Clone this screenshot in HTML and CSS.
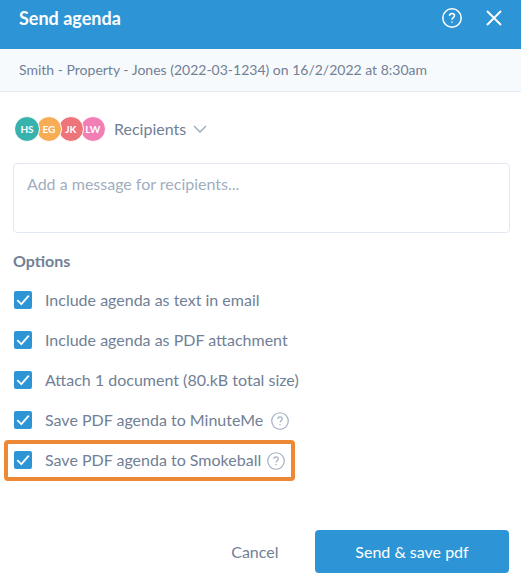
FILE: index.html
```html
<!DOCTYPE html>
<html lang="en">
<head>
<meta charset="utf-8">
<title>Send agenda</title>
<link rel="stylesheet" href="styles.css">
</head>
<body>
<svg class="defs" width="0" height="0" aria-hidden="true">
  <symbol id="help" viewBox="0 0 20 20">
    <circle cx="10" cy="10" r="9.2"/>
    <path d="M7.5 7.9C7.5 6.4 8.5 5.5 10 5.5s2.5 .9 2.5 2.3c0 1.9-2.5 1.9-2.5 4M10 13.4v1.4"/>
  </symbol>
  <symbol id="check" viewBox="0 0 18 18"><path d="M3.3 9.2l4 4 7.5-8.5"/></symbol>
</svg>
<main class="dialog">
  <header class="header">
    <h1 class="title">Send agenda</h1>
    <svg class="help help-header"><use href="#help"/></svg>
    <svg class="close" viewBox="0 0 16 16"><path d="M1 1l14 14M15 1L1 15"/></svg>
  </header>
  <div class="subject"><span>Smith - Property - Jones (2022-03-1234) on 16/2/2022 at 8:30am</span></div>
  <section class="recipients">
    <div class="avatars">
      <span class="avatar teal">HS</span>
      <span class="avatar orange">EG</span>
      <span class="avatar red">JK</span>
      <span class="avatar pink">LW</span>
    </div>
    <span class="recipients-label">Recipients</span>
    <svg class="chevron" viewBox="0 0 14 8"><path d="M1 1l6 6 6-6"/></svg>
  </section>
  <div class="message"><span>Add a message for recipients...</span></div>
  <h2 class="options-title">Options</h2>
  <ul class="options">
    <li class="option"><svg class="check"><use href="#check"/></svg><span>Include agenda as text in email</span></li>
    <li class="option"><svg class="check"><use href="#check"/></svg><span>Include agenda as PDF attachment</span></li>
    <li class="option"><svg class="check"><use href="#check"/></svg><span>Attach 1 document (80.kB total size)</span></li>
    <li class="option"><svg class="check"><use href="#check"/></svg><span>Save PDF agenda to MinuteMe</span><svg class="help"><use href="#help"/></svg></li>
    <li class="option highlighted"><svg class="check"><use href="#check"/></svg><span>Save PDF agenda to Smokeball</span><svg class="help"><use href="#help"/></svg></li>
  </ul>
  <footer class="footer">
    <span class="cancel">Cancel</span>
    <span class="send">Send &amp; save pdf</span>
  </footer>
</main>
</body>
</html>
```
FILE: styles.css
```css
* { box-sizing: border-box; }
body {
  margin: 0;
  background: #fff;
  color: #718096;
  font: 16px/24px Lato, "Liberation Sans", sans-serif;
}
svg { flex: none; fill: none; stroke: currentColor; }
.defs { position: absolute; }
.dialog { width: 521px; height: 582px; overflow: hidden; }
.header {
  display: flex;
  align-items: center;
  height: 49px;
  padding: 0 19px 13px;
  background: #2d95d6;
  color: #fff;
}
.title { margin: 0 auto 0 0; font-size: 18px; font-weight: 700; line-height: 24px; }
.help {
  width: 18px;
  height: 18px;
  margin: 1px 0 0 8px;
  color: #a0aec0;
  stroke-width: 1.3;
}
.help-header { width: 20px; height: 20px; margin: 0 24px 0 0; color: #fff; stroke-width: 1.5; }
.close { width: 16px; height: 16px; stroke-width: 1.9; }
.subject {
  display: flex;
  align-items: center;
  height: 43px;
  padding: 0 19px;
  border-bottom: 1px solid #e2e8f0;
  background: #f7fafc;
  font-size: 14px;
}
.recipients { display: flex; align-items: center; height: 26px; margin: 24px 14px 0; }
.avatars { display: flex; width: 92px; }
.avatar {
  flex: none;
  width: 26px;
  height: 26px;
  margin-right: -4.1px;
  border: 1px solid #fff;
  border-radius: 50%;
  color: #fff;
  font-size: 10px;
  font-weight: 700;
  line-height: 25px;
  text-align: center;
}
.avatar:nth-child(1) { z-index: 4; }
.avatar:nth-child(2) { z-index: 3; }
.avatar:nth-child(3) { z-index: 2; }
.teal { background: #38b2ac; }
.orange { background: #f6ad55; }
.red { background: #ed747b; }
.pink { background: #f17eb5; }
.recipients-label { margin-left: 8px; }
.chevron { width: 14px; height: 8px; margin-left: 7px; color: #a0aec0; stroke-width: 1.5; }
.message {
  height: 70px;
  margin: 21px 11px 0 13px;
  padding: 8px 13px;
  border: 1px solid #e2e8f0;
  border-radius: 4px;
  color: #a0aec0;
}
.options-title { margin: 16px 13px 0; font-size: 16px; font-weight: 700; line-height: 24px; }
.options { margin: 7px 0 0; padding: 0 4px; list-style: none; }
.option {
  display: flex;
  align-items: center;
  width: max-content;
  height: 40px;
  padding: 0 5px 0 6px;
  border: 4px solid transparent;
  border-radius: 4px;
}
.check {
  width: 18px;
  height: 18px;
  margin-right: 13px;
  border-radius: 2px;
  background: #2d95d6;
  color: #fff;
  stroke-width: 1.8;
}
.highlighted { height: 41px; padding: 0 6px 1px; border-color: #ed8936; }
.highlighted .help { margin-left: 6px; }
.footer { display: flex; align-items: center; justify-content: flex-end; margin: 49px 12px 0; }
.cancel { margin: 0 36.5px 0 0; }
.send {
  width: 194px;
  height: 43px;
  border-radius: 4px;
  background: #2d95d6;
  color: #fff;
  line-height: 44px;
  text-align: center;
}
```
